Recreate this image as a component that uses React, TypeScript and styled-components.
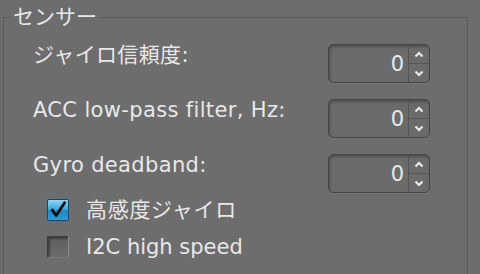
import { Fragment } from "react";
import styled, { createGlobalStyle } from "styled-components";

const GlobalStyle = createGlobalStyle`
  html, body {
    margin: 0;
    padding: 0;
    background: #6d6d6d;
    height: 274px;
    overflow: hidden;
  }
  body {
    font-family: "DejaVu Sans", "Noto Sans CJK JP", sans-serif;
    color: #e8e8e8;
    padding-top: 5px;
    box-sizing: border-box;
  }
`;

const Group = styled.fieldset`
  box-sizing: border-box;
  margin: 0 0 0 3px;
  width: 465px;
  height: 272px;
  padding: 0;
  border: 1px solid #5b5b5b;
  border-radius: 0;
`;

const Title = styled.legend`
  margin-left: 7px;
  padding: 0 2px;
  font-size: 21px;
  line-height: 24px;
  color: #e8e8e8;
`;

const Rows = styled.div`
  display: grid;
  grid-template-columns: 1fr 102px;
  row-gap: 16px;
  padding: 15px 37px 0 29px;
`;

const Label = styled.div`
  font-size: 21px;
  line-height: 24px;
  letter-spacing: 0.35px;
  align-self: start;
  margin-top: -1px;
  white-space: nowrap;
`;

const Spin = styled.div`
  box-sizing: border-box;
  height: 39px;
  display: flex;
  border: 1px solid #454545;
  border-radius: 5px;
  box-shadow: inset 1px 2px 3px rgba(0, 0, 0, 0.28), 0 1px 0 rgba(255, 255, 255, 0.06);
  background: #6b6b6b;
`;

const Value = styled.div`
  flex: 1;
  display: flex;
  align-items: center;
  justify-content: flex-end;
  padding-right: 4px;
  font-size: 21px;
`;

const Arrows = styled.div`
  width: 20px;
  display: flex;
  flex-direction: column;
  border-left: 1px solid #555;
`;

const Arrow = styled.div<{ $top?: boolean }>`
  flex: 1;
  display: flex;
  align-items: center;
  justify-content: center;
  border-bottom: ${(p) => (p.$top ? "1px solid #555" : "none")};
`;

const Checks = styled.div`
  display: flex;
  flex-direction: column;
  gap: 15px;
  padding: 6px 0 0 43px;
`;

const CheckRow = styled.label<{ $wide?: boolean }>`
  display: flex;
  align-items: center;
  gap: 17px;
  font-size: 21px;
  line-height: 22px;
  letter-spacing: ${(p) => (p.$wide ? "0.7px" : "0")};
`;

const Box = styled.span<{ $on?: boolean }>`
  box-sizing: border-box;
  width: 22px;
  height: 22px;
  flex: none;
  display: flex;
  align-items: center;
  justify-content: center;
  border-radius: 2px;
  border: 1px solid ${(p) => (p.$on ? "#1d4666" : "#3c3c3c")};
  border-right-color: ${(p) => (p.$on ? "#1d4666" : "#8a8a8a")};
  border-bottom-color: ${(p) => (p.$on ? "#1d4666" : "#7a7a7a")};
  background: ${(p) =>
    p.$on
      ? "linear-gradient(#8fd6f7, #3fa8dc 45%, #1f86c4 55%, #2a9ad6)"
      : "linear-gradient(#5e5e5e, #6c6c6c)"};
  box-shadow: ${(p) =>
    p.$on ? "inset 0 0 1px rgba(255,255,255,0.4)" : "inset 2px 2px 2px rgba(0,0,0,0.35)"};
`;

const Chevron = ({ up }: { up?: boolean }) => (
  <svg width="10" height="7" viewBox="0 0 10 7">
    <path
      d={up ? "M1.5 5.5 L5 2 L8.5 5.5" : "M1.5 1.5 L5 5 L8.5 1.5"}
      fill="none"
      stroke="#ececec"
      strokeWidth="2"
    />
  </svg>
);

const SpinBox = ({ value }: { value: number }) => (
  <Spin>
    <Value>{value}</Value>
    <Arrows>
      <Arrow $top>
        <Chevron up />
      </Arrow>
      <Arrow>
        <Chevron />
      </Arrow>
    </Arrows>
  </Spin>
);

const Check = ({ on, wide, label }: { on?: boolean; wide?: boolean; label: string }) => (
  <CheckRow $wide={wide}>
    <Box $on={on}>
      {on && (
        <svg width="22" height="22" viewBox="0 0 22 22">
          <path d="M4 10 L9 17 L19 2" fill="none" stroke="#0c0c0c" strokeWidth="3" strokeLinejoin="round" />
        </svg>
      )}
    </Box>
    {label}
  </CheckRow>
);

const fields = [
  { label: "ジャイロ信頼度:", value: 0 },
  { label: "ACC low-pass filter, Hz:", value: 0 },
  { label: "Gyro deadband:", value: 0 },
];

export default function App() {
  return (
    <>
      <GlobalStyle />
      <Group>
        <Title>センサー</Title>
        <Rows>
          {fields.map((f) => (
            <Fragment key={f.label}>
              <Label>{f.label}</Label>
              <SpinBox value={f.value} />
            </Fragment>
          ))}
        </Rows>
        <Checks>
          <Check on wide label="高感度ジャイロ" />
          <Check label="I2C high speed" />
        </Checks>
      </Group>
    </>
  );
}
